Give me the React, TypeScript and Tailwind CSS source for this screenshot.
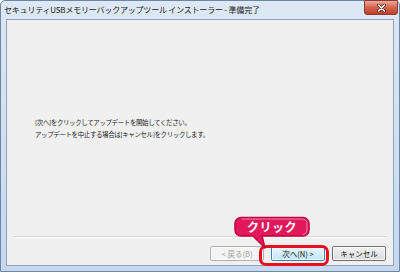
const jp = { fontFamily: '"Noto Sans CJK JP", "Noto Sans", sans-serif' };

function WinButton({ label, kind }: { label: string; kind: "normal" | "default" | "disabled" }) {
  const cls =
    kind === "default"
      ? "border-[#3c7fb1] bg-gradient-to-b from-[#eaf6fd] to-[#bee6fd] text-[#111]"
      : kind === "disabled"
        ? "border-[#adb2b5] bg-[#f4f4f4] text-[#a0a0a0]"
        : "border-[#707070] bg-gradient-to-b from-[#f2f2f2] to-[#dcdcdc] text-[#111]";
  return (
    <div className={`w-[54px] h-[15px] rounded-[2px] border flex items-center justify-center text-[7.5px] leading-none ${cls}`}
      style={jp}>
      <div className="w-full h-full rounded-[1px] border border-white/70 flex items-center justify-center">{label}</div>
    </div>
  );
}

export default function App() {
  return (
    <div className="w-[400px] h-[273px] bg-white overflow-hidden">
      <div className="relative w-[400px] h-[272px] rounded-t-[5px] border border-[#6c86a6] bg-gradient-to-b from-[#dde8f4] to-[#c6d8ee] flex flex-col">
        {/* title bar */}
        <div className="h-[18px] flex items-center pl-[3px] text-[8px] tracking-[-0.2px] text-[#1a1a1a] leading-none" style={jp}>
          セキュリティUSBメモリーバックアップツール インストーラー - 準備完了
        </div>
        <div className="absolute right-[1px] top-[-1px] w-[34px] h-[15px] rounded-b-[3px] border border-[#8a3a30] bg-gradient-to-b from-[#e9a99b] via-[#d3644f] to-[#c13b24] flex items-center justify-center">
          <svg width="9" height="8" viewBox="0 0 9 8">
            <path d="M1.5 1 L7.5 7 M7.5 1 L1.5 7" stroke="#3a1a14" strokeWidth="3" strokeLinecap="round" />
            <path d="M1.5 1 L7.5 7 M7.5 1 L1.5 7" stroke="#fff" strokeWidth="1.6" strokeLinecap="round" />
          </svg>
        </div>

        {/* client area */}
        <div className="flex-1 mx-[5px] mb-[5px] border border-[#8ba3c0] bg-[#f0f0f0] flex flex-col">
          <div className="flex-1 pl-[28px] pt-[99px] text-[6.5px] tracking-[-0.4px] text-[#222] leading-[7px] flex flex-col gap-[5px]" style={jp}>
            <div>[次へ]をクリックしてアップデートを開始してください。</div>
            <div>アップデートを中止する場合は[キャンセル]をクリックします。</div>
          </div>
          <div className="mx-[6px] border-t border-[#d5d5d5] border-b-white h-[2px] border-b" />
          <div className="flex justify-end gap-[7px] pr-[7px] pt-[8px] pb-[4px]">
            <WinButton label="< 戻る(B)" kind="disabled" />
            <WinButton label="次へ(N) >" kind="default" />
            <WinButton label="キャンセル" kind="normal" />
          </div>
        </div>

        {/* highlight + callout overlay */}
        <div className="absolute left-[258px] top-[244px] w-[70px] h-[21px] rounded-[7px] border-[3px] border-[#e8101e]" />
        <svg className="absolute left-[232px] top-[215px]" width="80" height="36" viewBox="0 0 80 36">
          <path d="M8 1.5 H70 a6 6 0 0 1 6 6 V14 a6 6 0 0 1 -6 6 H29 L32 32 L20 20 H8 a6 6 0 0 1 -6 -6 V7.5 a6 6 0 0 1 6 -6 Z"
            fill="#e2185c" stroke="#c4003e" strokeWidth="1.5" strokeLinejoin="round" />
          <path d="M8.5 3 H69.5 a4.5 4.5 0 0 1 4.5 4.5 V14 a4.5 4.5 0 0 1 -4.5 4.5"
            fill="none" stroke="#fff" strokeOpacity="0.6" strokeWidth="0.8" />
        </svg>
        <div className="absolute left-[234px] top-[217px] w-[74px] h-[18px] flex items-center justify-center text-white font-bold text-[12px] tracking-[0.5px] leading-none"
          style={jp}>
          クリック
        </div>
      </div>
    </div>
  );
}
